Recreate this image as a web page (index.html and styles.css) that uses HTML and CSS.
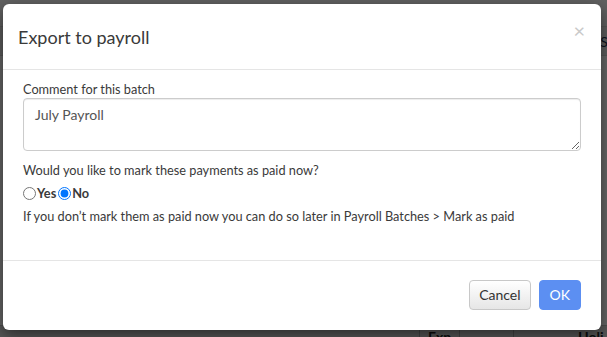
FILE: index.html
```html
<!DOCTYPE html>
<html lang="en">
<head>
  <meta charset="UTF-8" />
  <meta name="viewport" content="width=device-width, initial-scale=1.0"/>
  <title>Export to payroll</title>
  <link rel="stylesheet" href="styles.css">
</head>
<body>

  <!-- Page behind the dialog -->
  <div class="page">
    <div class="page-top"></div>
    <div class="page-bar"><span class="page-bar-text">St:</span></div>
    <div class="page-fill"></div>
    <div class="page-table-head">
      <div class="th th-wide"></div>
      <div class="th">Exp</div>
      <div class="th th-small"></div>
      <div class="th th-mid"></div>
      <div class="th th-last">Holi</div>
    </div>
  </div>

  <div class="backdrop"></div>

  <div class="modal">
    <div class="modal-header">
      <h4 class="modal-title">Export to payroll</h4>
      <button class="close" type="button">&times;</button>
    </div>

    <div class="modal-body">
      <label class="field-label" for="comment">Comment for this batch</label>
      <textarea id="comment" class="comment-box">July Payroll</textarea>

      <p class="question">Would you like to mark these payments as paid now?</p>
      <div class="radio-row">
        <input type="radio" name="paid" id="paidYes" />
        <label for="paidYes">Yes</label>
        <input type="radio" name="paid" id="paidNo" checked />
        <label for="paidNo">No</label>
      </div>
      <p class="hint">If you don’t mark them as paid now you can do so later in Payroll Batches &gt; Mark as paid</p>
    </div>

    <div class="modal-footer">
      <button class="btn btn-default" type="button">Cancel</button>
      <button class="btn btn-primary" type="button">OK</button>
    </div>
  </div>

</body>
</html>
```

FILE: styles.css
```css
/* Minimal Reset */
* {
  margin: 0;
  padding: 0;
  box-sizing: border-box;
  font-family: Lato, 'Open Sans', Arial, sans-serif;
}

body {
  width: 607px;
  height: 337px;
  overflow: hidden;
  background: #fff;
  color: #333;
  position: relative;
}

/* Underlying page (dimmed by the backdrop) */
.page {
  display: flex;
  flex-direction: column;
  height: 100%;
  overflow: hidden;
}
.page-top {
  height: 26px;
  background: #f2f2f2;
}
.page-bar {
  height: 30px;
  background: #e9e9e9;
  border-top: 1px solid #d8d8d8;
  border-bottom: 1px solid #d8d8d8;
  display: flex;
  justify-content: flex-end;
  align-items: center;
  overflow: hidden;
}
.page-bar-text {
  font-size: 14px;
  color: #1d2b4a;
  margin-right: -9px;
}
.page-fill {
  flex: 1;
  background: #fff;
}
.page-table-head {
  height: 12px;
  display: flex;
  background: #d9d9d9;
  border-top: 1px solid #c4c4c4;
  overflow: hidden;
}
.th {
  font-size: 14px;
  font-weight: bold;
  color: #222;
  padding: 2px 0 0 8px;
  border-right: 1px solid #aaa;
  width: 40px;
  flex-shrink: 0;
}
.th-wide  { width: 420px; }
.th-small { width: 54px; }
.th-mid   { width: 56px; border-right: none; }
.th-last  { width: 37px; border-right: none; }

.backdrop {
  position: absolute;
  inset: 0;
  background: rgba(0, 0, 0, 0.6);
}

/* Dialog */
.modal {
  position: absolute;
  left: 3px;
  top: 4px;
  width: 598px;
  height: 326px;
  background: #fff;
  border-radius: 6px;
  box-shadow: 0 5px 15px rgba(0, 0, 0, 0.5);
  display: flex;
  flex-direction: column;
}

.modal-header {
  display: flex;
  justify-content: space-between;
  align-items: flex-start;
  padding: 18px 15px 17px 15px;
  border-bottom: 1px solid #e5e5e5;
}
.modal-title {
  font-size: 18px;
  font-weight: normal;
  line-height: 30px;
  color: #3a3a3a;
}
.close {
  border: none;
  background: none;
  font-size: 20px;
  font-weight: normal;
  line-height: 1;
  color: #c9c9c9;
  margin-top: -2px;
  margin-right: 1px;
  cursor: pointer;
}

.modal-body {
  padding: 10px 20px 34px 20px;
  font-size: 12.75px;
  line-height: 1.42857;
  color: #3a3a3a;
}
.field-label {
  display: block;
}
.comment-box {
  display: block;
  width: 100%;
  height: 53px;
  margin-bottom: 10px;
  padding: 6px 11px;
  border: 1px solid #ccc;
  border-radius: 4px;
  box-shadow: inset 0 1px 1px rgba(0, 0, 0, 0.075);
  font-size: 14px;
  line-height: 20px;
  color: #555;
  resize: vertical;
}

.radio-row {
  display: flex;
  align-items: center;
  margin-top: 7px;
  height: 15px;
  line-height: 15px;
  font-weight: bold;
}
.radio-row input {
  width: 13px;
  height: 13px;
  margin: 0 1px 0 0;
}
.radio-row input + label + input {
  margin-left: 2px;
}
.hint {
  margin-top: 6px;
}

.modal-footer {
  display: flex;
  justify-content: flex-end;
  gap: 8px;
  padding: 19px 20px 20px 20px;
  border-top: 1px solid #e5e5e5;
}
.btn {
  height: 30px;
  padding: 0 10px;
  font-size: 14px;
  border-radius: 4px;
  cursor: pointer;
}
.btn-default {
  padding: 0 9px;
  color: #333;
  background: linear-gradient(#fff, #e6e6e6);
  border: 1px solid #c8c8c8;
}
.btn-primary {
  color: #fff;
  background: #5c8ff2;
  border: 1px solid #5c8ff2;
}
```
